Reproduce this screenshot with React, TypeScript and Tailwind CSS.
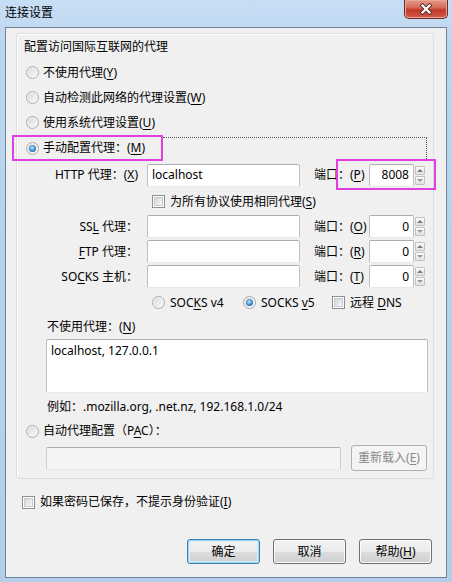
import type { ReactNode } from 'react'

function K({ c }: { c: string }) {
  return <span className="underline underline-offset-[2px]">{c}</span>
}

function Radio({ checked }: { checked?: boolean }) {
  return (
    <span className="flex size-[13px] shrink-0 items-center justify-center rounded-full border border-[#ababab] bg-[linear-gradient(135deg,#d6d6d6,#fdfdfd)] shadow-[inset_0_0_0_1px_#f4f4f4]">
      {checked && (
        <span className="size-[7px] rounded-full bg-[radial-gradient(circle_at_45%_40%,#b9ebff_0%,#3b86c7_55%,#1d4f86_100%)]" />
      )}
    </span>
  )
}

function Check() {
  return (
    <span className="flex size-[13px] shrink-0 items-center justify-center border border-[#8f8f8f] bg-white">
      <span className="size-[9px] border border-[#c6cbd0] bg-[linear-gradient(135deg,#d3d6da,#f7f7f7)]" />
    </span>
  )
}

function Field({ className, children, disabled }: { className: string; children?: ReactNode; disabled?: boolean }) {
  return (
    <div
      className={
        'flex h-[23px] items-center rounded-[2px] border border-[#bcc0c6] border-t-[#abadb3] border-b-[#e3e9ef] px-[4px] ' +
        (disabled ? 'bg-[#f4f4f4] border-[#c9cdd1] ' : 'bg-white ') +
        className
      }
    >
      {children}
    </div>
  )
}

function Spin() {
  return (
    <div className="ml-px flex h-[19px] w-[10px] flex-col gap-px">
      <div className="flex flex-1 items-center justify-center rounded-[1px] border border-[#c2c2c2] bg-[linear-gradient(#fbfbfb,#e2e2e2)]">
        <span className="border-x-[3px] border-b-[3px] border-x-transparent border-b-[#7a7a7a]" />
      </div>
      <div className="flex flex-1 items-center justify-center rounded-[1px] border border-[#c2c2c2] bg-[linear-gradient(#fbfbfb,#e2e2e2)]">
        <span className="border-x-[3px] border-t-[3px] border-x-transparent border-t-[#9a9a9a]" />
      </div>
    </div>
  )
}

function Port({ value, k, boxed }: { value: string; k: string; boxed?: boolean }) {
  return (
    <>
      <span className="ml-[14px] w-[50px] whitespace-nowrap">
        端口：(<K c={k} />)
      </span>
      <Field className="ml-[5px] w-[45px] justify-end">{value}</Field>
      <Spin />
      {boxed && (
        <div className="pointer-events-none absolute left-[319px] top-[-2px] h-[31px] w-[100px] border-2 border-[#e13fe0]" />
      )}
    </>
  )
}

function ProxyRow({ label, value, port, k }: { label: ReactNode; value?: string; port: string; k: string }) {
  return (
    <div className="flex h-[25px] items-center">
      <span className="w-[121px] whitespace-nowrap text-right">{label}</span>
      <Field className="ml-[9px] w-[153px]">{value}</Field>
      <Port value={port} k={k} />
    </div>
  )
}

function Btn({ children, def, disabled, className }: { children: ReactNode; def?: boolean; disabled?: boolean; className: string }) {
  let look =
    'border-[#707070] bg-[linear-gradient(#f2f2f2_0%,#ebebeb_50%,#dddddd_51%,#cfcfcf_100%)] shadow-[inset_0_0_0_1px_#fbfbfb]'
  if (def)
    look =
      'border-[#3c7fb1] bg-[linear-gradient(#f2f2f2_0%,#ebebeb_50%,#dddddd_51%,#cfcfcf_100%)] shadow-[inset_0_0_0_1px_#9fd8f7,inset_0_0_0_2px_#d7effb]'
  if (disabled) look = 'border-[#adb2b5] bg-[#f4f4f4] text-[#8a8a8a]'
  return (
    <div className={'flex items-center justify-center rounded-[3px] border ' + look + ' ' + className}>{children}</div>
  )
}

export default function App() {
  return (
    <div className="h-[582px] w-[452px] overflow-hidden bg-[linear-gradient(180deg,#c7def5_0%,#bcd5ee_8%,#b4cee9_100%)] font-['Noto_Sans','Noto_Sans_CJK_SC',sans-serif] text-[12px] leading-[16px] text-black">
      {/* title bar */}
      <div className="flex h-[27px] items-start justify-between">
        <span className="pl-[5px] pt-[5px]">连接设置</span>
        <div className="mr-[4px] flex h-[19px] w-[44px] items-center justify-center rounded-b-[5px] border border-t-0 border-[#6e2a24] bg-[linear-gradient(#e59a8a_0%,#d66b5b_42%,#c23a2c_55%,#d0594a_100%)] shadow-[inset_0_0_0_1px_#eba597]">
          <svg width="14" height="12" viewBox="0 0 14 12">
            <path d="M3.5 2.5 L10.5 9.5 M10.5 2.5 L3.5 9.5" stroke="#5a2a26" strokeWidth="4" strokeLinecap="square" />
            <path d="M3.5 2.5 L10.5 9.5 M10.5 2.5 L3.5 9.5" stroke="#ffffff" strokeWidth="2.2" strokeLinecap="square" />
          </svg>
        </div>
      </div>

      {/* client area */}
      <div className="mx-[5px] h-[551px] border border-[#70839a] bg-[#f0f0f0]">
        {/* group box */}
        <div className="ml-[10px] mt-[5px] h-[446px] w-[418px] rounded-[3px] border border-[#d5dfe5] shadow-[inset_1px_1px_0_#ffffff]">
          <div className="flex h-[26px] items-center pl-[7px]">配置访问国际互联网的代理</div>

          <div className="flex h-[25px] items-center gap-[4px] pl-[9px]">
            <Radio />
            <span>
              不使用代理(<K c="Y" />)
            </span>
          </div>
          <div className="flex h-[25px] items-center gap-[4px] pl-[9px]">
            <Radio />
            <span>
              自动检测此网络的代理设置(<K c="W" />)
            </span>
          </div>
          <div className="flex h-[25px] items-center gap-[4px] pl-[9px]">
            <Radio />
            <span>
              使用系统代理设置(<K c="U" />)
            </span>
          </div>
          <div className="relative flex h-[26px] items-center gap-[4px] pl-[9px]">
            <Radio checked />
            <span>
              手动配置代理：(<K c="M" />)
            </span>
            <div className="pointer-events-none absolute left-[146px] top-[2px] h-[22px] w-[264px] border-r border-t border-dotted border-[#555]" />
            <div className="pointer-events-none absolute left-[-5px] top-0 h-[26px] w-[151px] border-2 border-[#e13fe0]" />
          </div>

          <div className="relative flex h-[28px] items-center">
            <span className="w-[121px] whitespace-nowrap text-right">
              HTTP 代理：(<K c="X" />)
            </span>
            <Field className="ml-[9px] w-[153px]">localhost</Field>
            <Port value="8008" k="P" boxed />
          </div>

          <div className="flex h-[25px] items-center gap-[5px] pl-[135px]">
            <Check />
            <span>
              为所有协议使用相同代理(<K c="S" />)
            </span>
          </div>

          <ProxyRow
            label={
              <>
                SS<K c="L" /> 代理：
              </>
            }
            port="0"
            k="O"
          />
          <ProxyRow
            label={
              <>
                <K c="F" />
                TP 代理：
              </>
            }
            port="0"
            k="R"
          />
          <ProxyRow
            label={
              <>
                SO<K c="C" />
                KS 主机：
              </>
            }
            port="0"
            k="T"
          />

          <div className="flex h-[27px] items-center pl-[135px]">
            <div className="flex w-[91px] items-center gap-[5px]">
              <Radio />
              <span>
                SOC<K c="K" />S v4
              </span>
            </div>
            <div className="flex w-[89px] items-center gap-[5px]">
              <Radio checked />
              <span>
                SOCKS <K c="v" />5
              </span>
            </div>
            <div className="flex items-center gap-[5px]">
              <Check />
              <span>
                远程 <K c="D" />NS
              </span>
            </div>
          </div>

          <div className="flex h-[22px] items-center pl-[30px]">
            <span>
              不使用代理：(<K c="N" />)
            </span>
          </div>
          <div className="ml-[29px] mt-px h-[54px] w-[382px] rounded-[2px] border border-[#bcc0c6] border-t-[#abadb3] border-b-[#e3e9ef] bg-white px-[4px] pt-[3px]">
            localhost, 127.0.0.1
          </div>
          <div className="flex h-[28px] items-center pl-[30px]">例如：.mozilla.org, .net.nz, 192.168.1.0/24</div>

          <div className="flex h-[20px] items-center gap-[4px] pl-[9px]">
            <Radio />
            <span>
              自动代理配置（P<K c="A" />C）：
            </span>
          </div>
          <div className="ml-[29px] mt-[4px] flex h-[26px] items-center">
            <Field disabled className="w-[295px]" />
            <Btn disabled className="ml-[10px] h-[26px] w-[76px]">
              <span>
                重新载入(<K c="E" />)
              </span>
            </Btn>
          </div>
        </div>

        <div className="ml-[16px] mt-[11px] flex h-[24px] items-center gap-[5px]">
          <Check />
          <span>
            如果密码已保存，不提示身份验证(<K c="I" />)
          </span>
        </div>

        <div className="mt-[25px] flex justify-end gap-[13px] pr-[14px]">
          <Btn def className="h-[25px] w-[73px]">
            确定
          </Btn>
          <Btn className="h-[25px] w-[73px]">取消</Btn>
          <Btn className="h-[25px] w-[73px]">
            <span>
              帮助(<K c="H" />)
            </span>
          </Btn>
        </div>
      </div>
    </div>
  )
}
